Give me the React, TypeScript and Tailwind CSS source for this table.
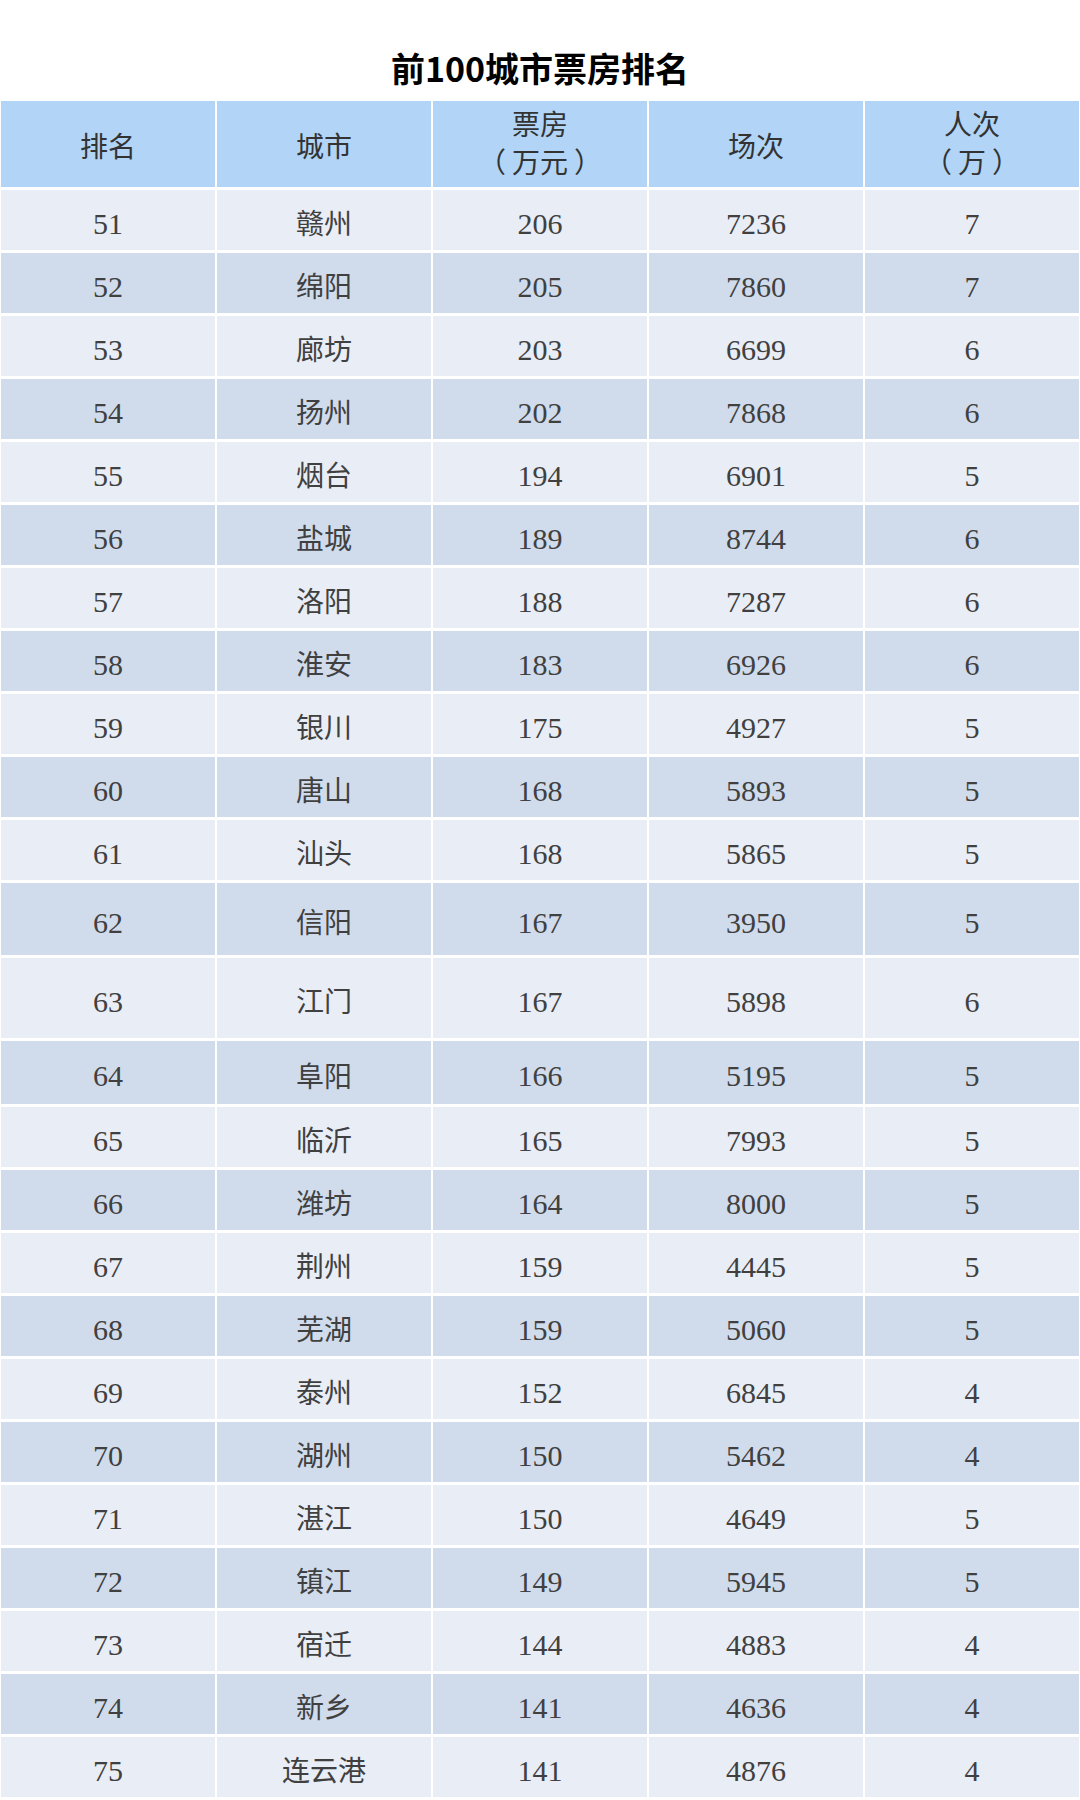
import React from "react";

type Row = { rank: string; city: string; box: string; shows: string; people: string; h: string };

const rows: Row[] = [
  { rank: "51", city: "赣州", box: "206", shows: "7236", people: "7", h: "h-[60px]" },
  { rank: "52", city: "绵阳", box: "205", shows: "7860", people: "7", h: "h-[60px]" },
  { rank: "53", city: "廊坊", box: "203", shows: "6699", people: "6", h: "h-[60px]" },
  { rank: "54", city: "扬州", box: "202", shows: "7868", people: "6", h: "h-[60px]" },
  { rank: "55", city: "烟台", box: "194", shows: "6901", people: "5", h: "h-[60px]" },
  { rank: "56", city: "盐城", box: "189", shows: "8744", people: "6", h: "h-[60px]" },
  { rank: "57", city: "洛阳", box: "188", shows: "7287", people: "6", h: "h-[60px]" },
  { rank: "58", city: "淮安", box: "183", shows: "6926", people: "6", h: "h-[60px]" },
  { rank: "59", city: "银川", box: "175", shows: "4927", people: "5", h: "h-[60px]" },
  { rank: "60", city: "唐山", box: "168", shows: "5893", people: "5", h: "h-[60px]" },
  { rank: "61", city: "汕头", box: "168", shows: "5865", people: "5", h: "h-[60px]" },
  { rank: "62", city: "信阳", box: "167", shows: "3950", people: "5", h: "h-[72px]" },
  { rank: "63", city: "江门", box: "167", shows: "5898", people: "6", h: "h-[80px]" },
  { rank: "64", city: "阜阳", box: "166", shows: "5195", people: "5", h: "h-[63px]" },
  { rank: "65", city: "临沂", box: "165", shows: "7993", people: "5", h: "h-[60px]" },
  { rank: "66", city: "潍坊", box: "164", shows: "8000", people: "5", h: "h-[60px]" },
  { rank: "67", city: "荆州", box: "159", shows: "4445", people: "5", h: "h-[60px]" },
  { rank: "68", city: "芜湖", box: "159", shows: "5060", people: "5", h: "h-[60px]" },
  { rank: "69", city: "泰州", box: "152", shows: "6845", people: "4", h: "h-[60px]" },
  { rank: "70", city: "湖州", box: "150", shows: "5462", people: "4", h: "h-[60px]" },
  { rank: "71", city: "湛江", box: "150", shows: "4649", people: "5", h: "h-[60px]" },
  { rank: "72", city: "镇江", box: "149", shows: "5945", people: "5", h: "h-[60px]" },
  { rank: "73", city: "宿迁", box: "144", shows: "4883", people: "4", h: "h-[60px]" },
  { rank: "74", city: "新乡", box: "141", shows: "4636", people: "4", h: "h-[60px]" },
  { rank: "75", city: "连云港", box: "141", shows: "4876", people: "4", h: "h-[60px]" },
];

const headBase =
  "h-[86px] bg-[#b2d5f7] flex flex-col items-center justify-center text-[28px] text-[#333333] font-['Liberation_Serif','Noto_Sans_CJK_SC',serif]";

function HeadCell({ label }: { label: string }) {
  return (
    <div className={`${headBase} pt-[8px]`}>
      <span>{label}</span>
    </div>
  );
}

function HeadCell2({ top, unit }: { top: string; unit: string }) {
  return (
    <div className={`${headBase} leading-[38px] pt-[2px]`}>
      <span>{top}</span>
      <span className="flex">
        <span className="mr-[6px]">（</span>
        <span>{unit}</span>
        <span className="ml-[6px]">）</span>
      </span>
    </div>
  );
}

export default function App() {
  return (
    <div className="w-[1080px] h-[1800px] bg-white overflow-hidden">
      <div className="h-[101px] pt-[34px] flex items-center justify-center">
        <h1 className="text-[34px] leading-[40px] font-bold text-black font-['Noto_Sans_CJK_SC',sans-serif]">
          前100城市票房排名
        </h1>
      </div>
      <div className="ml-[1px] grid grid-cols-[repeat(5,214px)] gap-x-[2px] gap-y-[3px]">
        <HeadCell label="排名" />
        <HeadCell label="城市" />
        <HeadCell2 top="票房" unit="万元" />
        <HeadCell label="场次" />
        <HeadCell2 top="人次" unit="万" />
        {rows.map((r, i) => {
          const bg = i % 2 === 0 ? "bg-[#e9edf6]" : "bg-[#d0dcec]";
          return (
            <React.Fragment key={r.rank}>
              {[r.rank, r.city, r.box, r.shows, r.people].map((v, j) => (
                <div
                  key={j}
                  className={`${r.h} ${bg} flex items-center justify-center text-[#404040] font-['Liberation_Serif','Noto_Sans_CJK_SC',serif] ${
                    j === 1 ? "text-[28px] pt-[10px]" : "text-[30px] pt-[6px]"
                  }`}
                >
                  {v}
                </div>
              ))}
            </React.Fragment>
          );
        })}
      </div>
    </div>
  );
}
